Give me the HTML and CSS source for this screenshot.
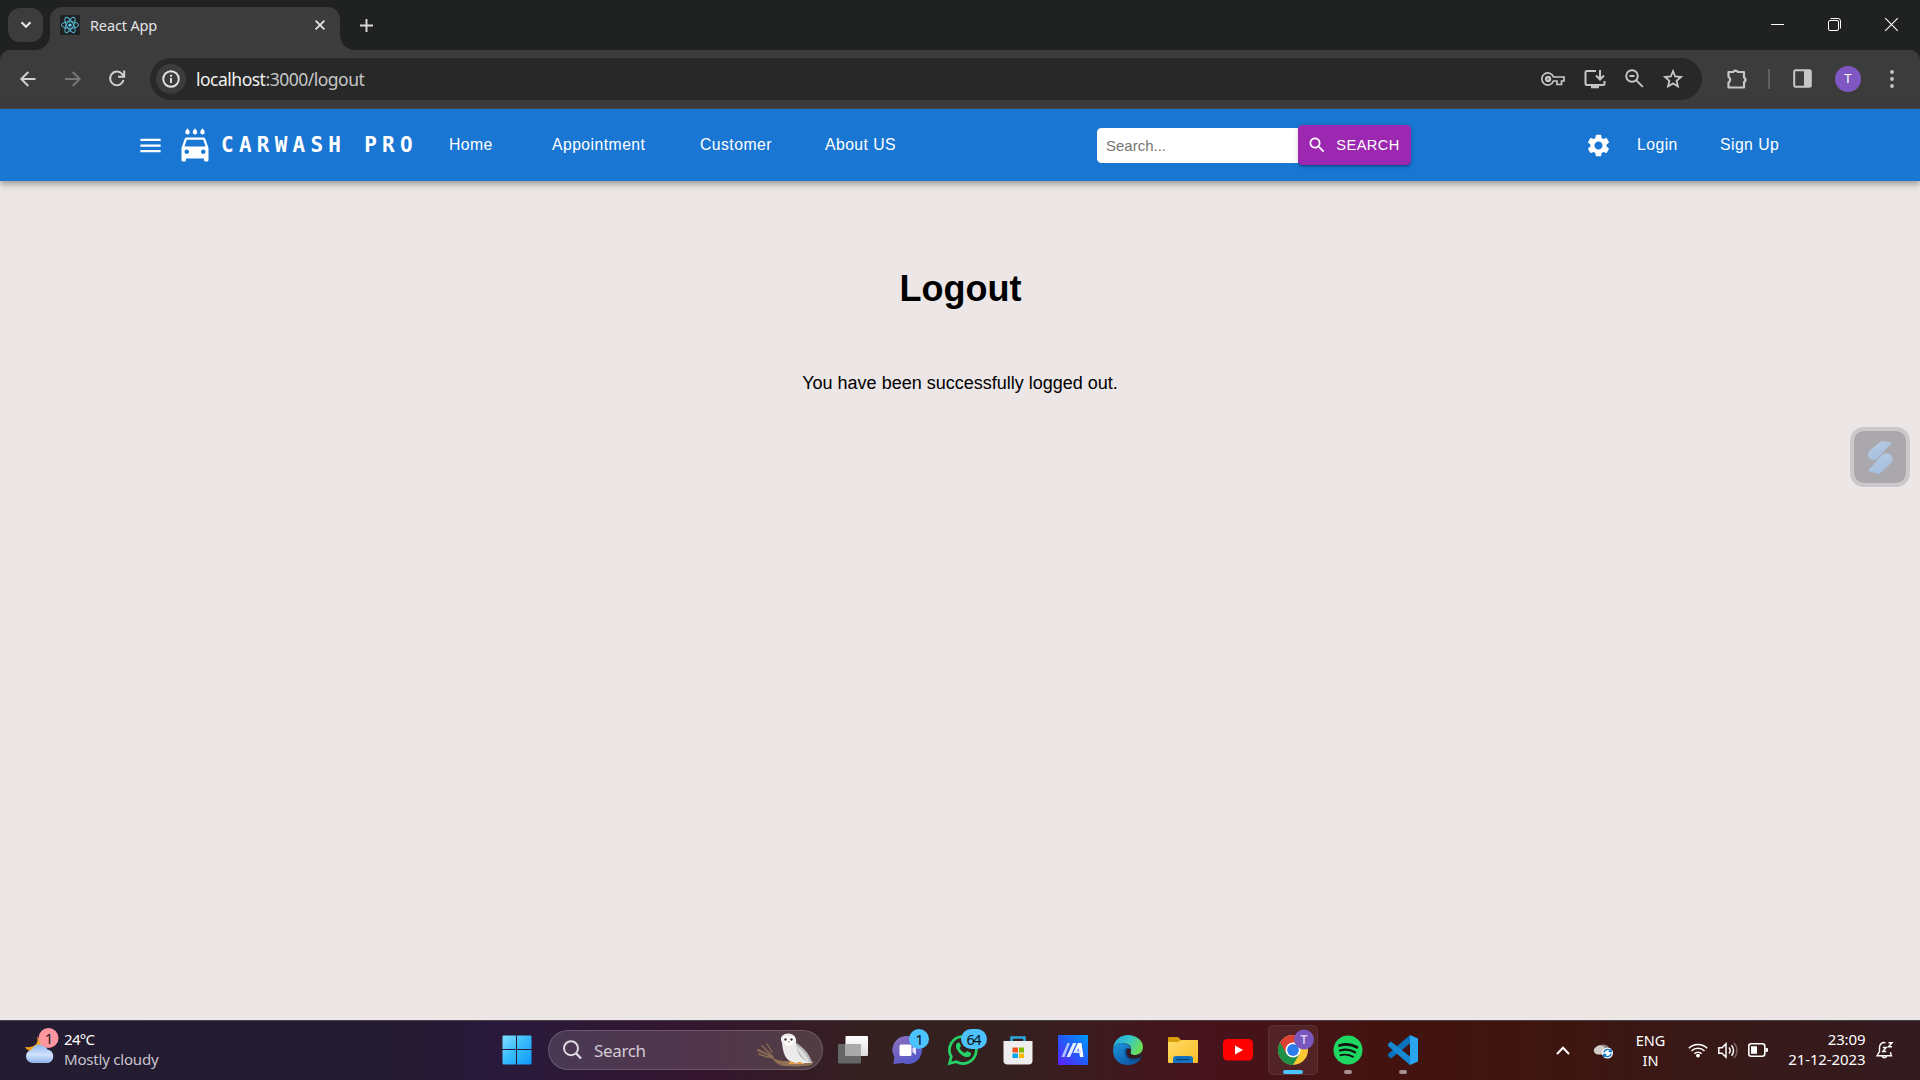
FILE: index.html
```html
<!DOCTYPE html>
<html lang="en">
<head>
<meta charset="utf-8">
<title>React App</title>
<link rel="stylesheet" href="styles.css">
</head>
<body>
<div class="screen">
  <div class="titlebar">
    <div class="tab-search"><svg width="12" height="8" viewBox="0 0 12 8"><path d="M1.5 1.2 6 5.7l4.500-4.500" fill="none" stroke="#e3e3e3" stroke-width="2.200"/></svg></div>
    <div class="tab">
      <svg class="favicon" width="20" height="20" viewBox="0 0 20 20"><rect width="20" height="20" rx="1" fill="#202226"/><g fill="none" stroke="#56b9d2" stroke-width="1"><ellipse cx="10" cy="10" rx="8.600" ry="3.300"/><ellipse cx="10" cy="10" rx="8.600" ry="3.300" transform="rotate(60 10 10)"/><ellipse cx="10" cy="10" rx="8.600" ry="3.300" transform="rotate(120 10 10)"/></g><circle cx="10" cy="10" r="1.600" fill="#61dafb"/></svg>
      <span class="tab-title">React App</span>
      <svg class="tab-close" width="10" height="10" viewBox="0 0 10 10"><path d="M.6.6l8.800 8.800M9.400.6.6 9.400" stroke="#e3e3e3" stroke-width="1.800"/></svg>
    </div>
    <svg class="new-tab" width="13" height="13" viewBox="0 0 13 13"><path d="M6.500 0v13M0 6.500h13" stroke="#dcdcdc" stroke-width="1.900"/></svg>
    <div class="window-buttons">
      <svg width="13" height="13" viewBox="0 0 13 13"><path d="M0 6.500h13" stroke="#fff"/></svg>
      <svg width="13" height="13" viewBox="0 0 13 13" fill="none" stroke="#fff"><rect x=".5" y="2.500" width="10" height="10" rx="1.500"/><path d="M2.500.5H10a2.500 2.500 0 0 1 2.500 2.500v7.500"/></svg>
      <svg width="13" height="13" viewBox="0 0 13 13"><path d="M.2.2l12.600 12.600M12.800.2.2 12.800" stroke="#fff" stroke-width="1.100"/></svg>
    </div>
  </div>

  <div class="toolbar-back">
  <div class="toolbar">
    <div class="nav-buttons">
      <svg width="16" height="16" viewBox="0 0 16 16" fill="none" stroke="#cfcfcf" stroke-width="2"><path d="M15.500 8H2M8.300 1 1.300 8l7 7"/></svg>
      <svg width="16" height="16" viewBox="0 0 16 16" fill="none" stroke="#787878" stroke-width="2"><path d="M0 8h14M7.700 1l7 7-7 7"/></svg>
      <svg width="17" height="17" viewBox="0 0 17 17" fill="none" stroke="#cfcfcf" stroke-width="2"><path d="M14.500 10a6.800 6.800 0 1 1-1.500-6.100L15 6M15.200.5v6.300H9"/></svg>
    </div>
    <div class="omnibox">
      <span class="site-info"><svg width="18" height="18" viewBox="0 0 18 18"><circle cx="9" cy="9" r="7.800" fill="none" stroke="#e3e3e3" stroke-width="1.900"/><path d="M9 8v5M9 4.800v1.900" stroke="#e3e3e3" stroke-width="1.900"/></svg></span>
      <span class="url"><b>localhost</b>:3000/logout</span>
      <div class="omni-icons">
        <svg width="24" height="14" viewBox="0 0 24 14" fill="none" stroke="#c7c7c7" stroke-width="1.700"><path d="M12.500 5a6 6 0 1 0 0 4H16v3.500h4.500V9H23V5z"/><circle cx="7" cy="7" r="2" stroke-width="2.400"/></svg>
        <svg width="22" height="20" viewBox="0 0 22 20" fill="none" stroke="#c7c7c7" stroke-width="2"><path d="M12 2H3a1.500 1.500 0 0 0-1.500 1.500v11A1.500 1.500 0 0 0 3 16h16a1.500 1.500 0 0 0 1.500-1.500V12M16 1v9M12 6.500l4 4 4-4"/><path d="M7 17.800h8" stroke-width="3"/></svg>
        <svg width="19" height="19" viewBox="0 0 19 19" fill="none" stroke="#c7c7c7" stroke-width="1.900"><circle cx="7" cy="7" r="5.800"/><path d="M4.500 7h5M11.300 11.300l6.500 6.500" /></svg>
        <svg width="20" height="20" viewBox="0 0 20 20" fill="none" stroke="#c7c7c7" stroke-width="1.800"><path d="m10 2.200 2.200 5.300 5.800.5-4.400 3.800 1.300 5.600-4.900-3-4.900 3 1.300-5.600L2 8l5.800-.5z"/></svg>
      </div>
    </div>
    <div class="chrome-actions">
      <svg class="puzzle" width="22" height="22" viewBox="0 0 22 22"><path d="M2.500 4h4.700a2.700 2.700 0 0 1 4.600 0H18v5.500a2.400 2.400 0 0 1 0 4.500v5.500H2.500v-5a3 3 0 0 0 0-5.400z" fill="none" stroke="#c7c7c7" stroke-width="2.200" stroke-linejoin="round"/><path d="M7 3.500a2.700 2.700 0 0 1 5 0zM18.500 9a2.700 2.700 0 0 1 0 5z" fill="#c7c7c7"/></svg>
      <i class="divider"></i>
      <svg class="panel" width="19" height="19" viewBox="0 0 19 19"><rect x="1.200" y="1.200" width="16.600" height="16.600" rx="1.500" fill="none" stroke="#c7c7c7" stroke-width="2"/><path d="M11 1h6.500v17H11z" fill="#c7c7c7"/></svg>
      <span class="avatar">T</span>
      <svg class="dots" width="4" height="18" viewBox="0 0 4 18" fill="#c7c7c7"><circle cx="2" cy="2" r="1.900"/><circle cx="2" cy="9" r="1.900"/><circle cx="2" cy="16" r="1.900"/></svg>
    </div>
  </div>
  </div>

  <header class="appbar">
    <svg class="menu" width="27" height="27" viewBox="0 0 24 24" fill="#fff"><path d="M3 18h18v-2H3v2zm0-5h18v-2H3v2zm0-7v2h18V6H3z"/></svg>
    <svg class="carwash" width="36" height="36" viewBox="0 0 24 24" fill="#fff"><path d="M17 5c.83 0 1.500-.67 1.500-1.500 0-1-1.500-2.700-1.500-2.700s-1.500 1.700-1.500 2.700c0 .83.67 1.500 1.500 1.500zm-5 0c.83 0 1.500-.67 1.500-1.500 0-1-1.500-2.700-1.500-2.700s-1.500 1.700-1.500 2.700c0 .83.67 1.500 1.500 1.500zM7 5c.83 0 1.500-.67 1.500-1.500C8.500 2.500 7 .8 7 .8S5.500 2.500 5.500 3.500C5.500 4.330 6.170 5 7 5zm11.920 3.010C18.720 7.420 18.160 7 17.500 7h-11c-.66 0-1.210.42-1.420 1.010L3 14v8c0 .55.45 1 1 1h1c.55 0 1-.45 1-1v-1h12v1c0 .55.45 1 1 1h1c.55 0 1-.45 1-1v-8l-2.080-5.990zM6.500 18c-.83 0-1.500-.67-1.500-1.500S5.670 15 6.500 15s1.500.67 1.500 1.500S7.330 18 6.500 18zm11 0c-.83 0-1.500-.67-1.500-1.500s.67-1.500 1.500-1.500 1.500.67 1.500 1.500-.67 1.500-1.500 1.500zM5 13l1.500-4.500h11L19 13H5z"/></svg>
    <span class="brand">CARWASH PRO</span>
    <nav class="links"><a class="home">Home</a><a class="appointment">Appointment</a><a class="customer">Customer</a><a>About US</a></nav>
    <form class="search">
      <input type="text" placeholder="Search...">
      <button type="button"><svg width="20.250" height="20.250" viewBox="0 0 24 24" fill="#fff"><path d="M15.500 14h-.79l-.28-.27C15.410 12.590 16 11.110 16 9.500 16 5.910 13.090 3 9.500 3S3 5.910 3 9.500 5.910 16 9.500 16c1.610 0 3.090-.59 4.230-1.570l.27.28v.79l5 4.990L20.490 19l-4.990-5zm-6 0C7.010 14 5 11.990 5 9.500S7.010 5 9.500 5 14 7.010 14 9.500 11.990 14 9.500 14z"/></svg><span>SEARCH</span></button>
    </form>
    <svg class="gear" width="27" height="27" viewBox="0 0 24 24" fill="#fff"><path d="M19.140 12.940c.04-.3.06-.61.06-.94 0-.32-.02-.64-.07-.94l2.030-1.580c.18-.14.23-.41.12-.61l-1.920-3.320c-.12-.22-.37-.29-.59-.22l-2.390.96c-.5-.38-1.030-.7-1.620-.94l-.36-2.540c-.04-.24-.24-.41-.48-.41h-3.840c-.24 0-.43.17-.47.41l-.36 2.540c-.59.24-1.130.57-1.620.94l-2.390-.96c-.22-.08-.47 0-.59.22L2.740 8.870c-.12.21-.08.47.12.61l2.030 1.580c-.05.3-.09.63-.09.94s.02.64.07.94l-2.030 1.580c-.18.14-.23.41-.12.61l1.920 3.320c.12.22.37.29.59.22l2.390-.96c.5.38 1.030.7 1.620.94l.36 2.540c.05.24.24.41.48.41h3.840c.24 0 .44-.17.47-.41l.36-2.540c.59-.24 1.130-.56 1.620-.94l2.390.96c.22.08.47 0 .59-.22l1.920-3.320c.12-.22.07-.47-.12-.61l-2.010-1.580zM12 15.600c-1.980 0-3.600-1.620-3.600-3.600s1.620-3.600 3.600-3.600 3.600 1.620 3.600 3.600-1.620 3.600-3.600 3.600z"/></svg>
    <a class="login">Login</a><a class="signup">Sign Up</a>
  </header>

  <main>
    <h1>Logout</h1>
    <p>You have been successfully logged out.</p>
    <div class="widget">
      <svg width="26" height="34" viewBox="0 0 26 34"><defs><linearGradient id="wg" x1="0" y1="0" x2=".6" y2="1"><stop offset="0" stop-color="#bccbde"/><stop offset="1" stop-color="#a3bfe2"/></linearGradient></defs><path d="M14.500.8 25 2.800 9.500 19.500c-3 1-5.500.8-7.500-1.500-2-3-1.200-5 .8-7.500z" fill="url(#wg)"/><path d="M16 14c3.500-1.200 6.500-.8 8.500 1.500 2 3 1.200 5.500-.8 8L12.300 34 .8 31z" fill="url(#wg)"/></svg>
    </div>
  </main>

  <footer class="taskbar">
    <div class="weather">
      <svg width="36" height="38" viewBox="0 0 36 38"><defs><linearGradient id="cl" x1="0" y1="0" x2="0" y2="1"><stop offset="0" stop-color="#8db8f2"/><stop offset=".55" stop-color="#d0e2fb"/><stop offset="1" stop-color="#8fb2ec"/></linearGradient></defs><path d="M12 8c2 7-1.500 12-12 11 4 7 16 5 18-2z" fill="#f5a21c"/><path d="M7 35a6.800 6.800 0 0 1 0-13.500 8.500 8.500 0 0 1 15.500 0A7 7 0 0 1 23.500 35z" fill="url(#cl)"/><circle cx="23.500" cy="10" r="10" fill="#fe96a0"/><text x="24" y="15.500" font-size="15" text-anchor="middle" fill="#222">1</text></svg>
      <div class="weather-text"><span class="temp">24°C</span><span class="sky">Mostly cloudy</span></div>
    </div>
    <svg class="start" width="30" height="30" viewBox="0 0 30 30"><defs><linearGradient id="win" x1="0" y1="0" x2="1" y2="1"><stop offset="0" stop-color="#80e0ff"/><stop offset=".5" stop-color="#35b9fb"/><stop offset="1" stop-color="#0d98f8"/></linearGradient></defs><path d="M1.500.5H14V14H.5V1.500a1 1 0 0 1 1-1zM15 .5h13.500a1 1 0 0 1 1 1V14H15zM.5 15H14v14.500H1.500a1 1 0 0 1-1-1zM15 15h14.500v13.500a1 1 0 0 1-1 1H15z" fill="url(#win)"/></svg>
    <div class="task-search">
      <svg width="19" height="20" viewBox="0 0 19 20" fill="none" stroke="#e0d9e1" stroke-width="2"><circle cx="8" cy="8.200" r="7"/><path d="m13 13.200 5 5.300" stroke-width="2.400"/></svg>
      <span>Search</span>
      <svg class="owl" width="60" height="34" viewBox="0 0 60 34"><g fill="none" stroke="#8d6d53" stroke-linecap="round"><path d="M3 17c8 4 9 3 14 8" stroke-width="2"/><path d="M7 13c5 4 6 6 11 11M4 21l8 3 6 0" stroke-width="1.500"/><path d="M12 11l5 8" stroke-width="1.300"/></g><path d="M15 22c5 6 12 6 19 6h22l3 1-3 3c-12 2-23 1.500-30 .5-5-2-9-7-11-10.500z" fill="#927154"/><path d="M27 10C24 4 28 .5 33 .5c6 0 9 4 8 9.500l7 6c6 5 7 10 9 14h-7c-4 1.500-9 1-13-1-6-2-9-8-10-19z" fill="#ecebea"/><path d="M41 10c7 4 13 10 16 20-8-1-16-8-16-20z" fill="#b7b8bb"/><path d="M40 12c4 8 8 13 12 17l2-1c-3-6-7-12-14-16z" fill="#ddd"/><path d="M28 5c2-3 5-2 5.500 0 2-3 5-2 6 0 0 4-2 7-5 8-4 0-6-4-6.500-8z" fill="#fff"/><circle cx="30.500" cy="6.500" r="1.200" fill="#3b3136"/><circle cx="36.500" cy="6.500" r="1.200" fill="#3b3136"/><path d="m33 8 1 3 .7-3z" fill="#c5966e"/><path d="M34 29h5l2 2h-7zM42 29h4l2 2h-5z" fill="#e59a45"/></svg>
    </div>
    <div class="apps">
      <span><svg viewBox="0 0 30 30"><defs><linearGradient id="tv" x1="0" y1="0" x2="0" y2="1"><stop offset="0" stop-color="#fff"/><stop offset="1" stop-color="#dcdcdc"/></linearGradient></defs><rect y="9" width="23" height="19.500" rx="1" fill="#666"/><rect x="7.500" y="1" width="22.500" height="20" rx="1" fill="url(#tv)"/><path d="M7.500 9H23v12H7.500z" fill="#aaa"/></svg></span>
      <span><svg viewBox="0 0 30 30"><defs><linearGradient id="ch" x1="0" y1="0" x2=".6" y2="1"><stop offset="0" stop-color="#8f70bd"/><stop offset="1" stop-color="#5459cb"/></linearGradient></defs><path d="M15 1a14 14 0 1 1-5 27.100L.4 29l1-7A14 14 0 0 1 15 1z" fill="url(#ch)"/><rect x="6.500" y="9.500" width="12" height="11.500" rx="1.500" fill="#fff"/><path d="m19.500 13 3.500-3v10l-3.500-3z" fill="#e7e5ff"/><circle cx="26" cy="4" r="10" fill="#4cc2ff"/><text x="26.500" y="9.500" font-size="15" text-anchor="middle" fill="#111">1</text></svg></span>
      <span><svg viewBox="0 0 30 30"><path d="M15 1.500A13.500 13.500 0 0 0 3.300 21.800L1.500 28.500l6.800-1.700A13.500 13.500 0 1 0 15 1.500z" fill="none" stroke="#25d366" stroke-width="2.700"/><path d="M10.500 7.500c-3 1-3 4-1.500 7 2.500 4.500 7 8 11 7.500 2.500-.6 3.300-2 3-4l-4-2-2 2c-3-1.200-4.500-3-5.500-5l1.500-2-1.700-3.500z" fill="#25d366"/><rect x="13" y="-6" width="26" height="20" rx="10" fill="#4cc2ff"/><text x="26" y="9.500" font-size="14.500" text-anchor="middle" textLength="15" fill="#111">64</text></svg></span>
      <span><svg viewBox="0 0 30 30"><path d="M8.500 7V2.500h13V7" fill="none" stroke="#2ba9e0" stroke-width="2.500"/><path d="M.5 6h29v19.500a4 4 0 0 1-4 4h-21a4 4 0 0 1-4-4z" fill="#eee"/><path d="M9.500 12.500H15v5H9.500z" fill="#f25022"/><path d="M16 12.500h5v5h-5z" fill="#7fba00"/><path d="M9.500 18.500H15V23H9.500z" fill="#00a4ef"/><path d="M16 18.500h5V23h-5z" fill="#ffb900"/></svg></span>
      <span><svg viewBox="0 0 30 30"><defs><linearGradient id="as" x1="0" y1="1" x2="1" y2="0"><stop offset="0" stop-color="#5d20f5"/><stop offset=".5" stop-color="#235af8"/><stop offset="1" stop-color="#009afe"/></linearGradient></defs><path d="M0 0h30v30H0z" fill="url(#as)"/><path d="M9.500 8H12L6.500 22H3.500z" fill="#acc3ff"/><path d="M15 8h3.500l-6.500 14H8.500z" fill="#e5edff"/><path d="M20 8h3.500l2 14H22l-1.500-9-3 5h-2.300z" fill="#fff"/><path d="M17 15.500h5.500l.5 2.500h-7z" fill="#ccd8ff"/></svg></span>
      <span><svg viewBox="0 0 30 30"><defs><linearGradient id="e1" x1="0" y1="0" x2="1" y2=".4"><stop offset="0" stop-color="#1fa6dc"/><stop offset=".55" stop-color="#38c5c8"/><stop offset="1" stop-color="#69dd58"/></linearGradient><linearGradient id="e2" x1="0" y1="0" x2=".7" y2="1"><stop offset="0" stop-color="#1c96dd"/><stop offset="1" stop-color="#0b56a4"/></linearGradient></defs><path d="M0 14C1 5 7 0 15 0s15 5 15 12c0 6-5 8-9 8-3 0-5-1-4-3 2-1 2-7-4-8.500C7 7 2 9 0 14z" fill="url(#e1)"/><path d="M0 15C1 10 5 8 9 8c6 0 9 4 9 7-3-1-5 2-5 5 1 5 9 7 15 3-3 5-8 7-13 7C6 30 0 24 0 15z" fill="url(#e2)"/><path d="M12.500 13.500c2-1.500 5 0 5 2.500-2 2-2 4 4 4.500 3 0 5-1 7-1.500 1 1 .5 3-.5 4-4 4-10 3.500-13 1-4-3-4-8-2.500-10.500z" fill="#0c4c91"/><path d="M14 14c2-1.500 4.500 0 4 2.500-1 2-.5 3.500 6 4 2-.2 3.500-.8 5-1.200.3 1-.2 2-1 2.700-4 2-9 2-12 .5-2.500-2-3-5.500-2-8.500z" fill="#35181d"/></svg></span>
      <span><svg viewBox="0 0 30 30"><defs><linearGradient id="fo" x1="0" y1="0" x2="1" y2="1"><stop offset="0" stop-color="#ffdb66"/><stop offset="1" stop-color="#fabd26"/></linearGradient></defs><path d="M1 2h9l3 3h16a1 1 0 0 1 1 1v6H0V3a1 1 0 0 1 1-1z" fill="#d99e0b"/><path d="M0 7h10l3-2h16a1 1 0 0 1 1 1v21a1 1 0 0 1-1 1H1a1 1 0 0 1-1-1z" fill="url(#fo)"/><path d="M5 28v-4a3 3 0 0 1 3-3h14a3 3 0 0 1 3 3v4z" fill="#1673be"/><path d="M8.500 24.500h13" stroke="#0b477f" stroke-width="1.500"/></svg></span>
      <span><svg viewBox="0 0 30 30"><rect y="4" width="30" height="21.500" rx="4.500" fill="#f00"/><path d="m12 10.500 8 4.500-8 4.500z" fill="#fff"/></svg></span>
      <span class="active"><svg viewBox="0 0 30 30"><circle cx="15" cy="15" r="15" fill="#fcc934"/><path d="M15 15 2 7.500A15 15 0 0 0 15 30l6.500-11.200z" fill="#1e9148"/><path d="M2 7.500A15 15 0 0 1 28 7.500H15v7.500L8.500 18.700z" fill="#df4035"/><circle cx="15" cy="15" r="7.500" fill="#fff"/><circle cx="15" cy="15" r="5.900" fill="#2e7cec"/><circle cx="26" cy="4.500" r="10" fill="#7957bd"/><text x="26" y="9" font-size="12" font-weight="600" text-anchor="middle" fill="#d9c9ee">T</text></svg></span>
      <span class="running"><svg viewBox="0 0 30 30"><circle cx="15" cy="15" r="14.500" fill="#1ed760"/><g fill="none" stroke="#111" stroke-linecap="round"><path d="M6.500 10.500c6-1.800 12.500-1 17.500 1.800" stroke-width="2.700"/><path d="M7 15.500c5-1.500 10.500-.8 15 1.800" stroke-width="2.300"/><path d="M7.500 20.200c4.500-1.100 8.500-.6 12.500 1.600" stroke-width="1.900"/></g></svg></span>
      <span class="running"><svg viewBox="0 0 30 30"><path d="M22 0v8.500L3 23.500 0 21v-2z" fill="#0873bd"/><path d="M22 30v-8.500L3 6.500 0 9v2z" fill="#1689d2"/><path d="m22 0 8 3.500v23L22 30z" fill="#29a5f2"/></svg></span>
    </div>
    <div class="tray">
      <svg class="chev" width="14" height="9" viewBox="0 0 14 9"><path d="m1 8 6-6.200L13 8" fill="none" stroke="#fff" stroke-width="2"/></svg>
      <svg class="cloud" width="20" height="18" viewBox="0 0 20 18"><path d="M5 7a6 6 0 0 1 11 0v6H5z" fill="#908280"/><path d="M4 13.500A4 4 0 0 1 3 6c3-3 7-2 9 1v6.500z" fill="#d3cccb"/><circle cx="14.500" cy="12" r="5.500" fill="#fff"/><path d="M11 11.500a3.600 3.600 0 0 1 6.700-1.300M18 12.500a3.600 3.600 0 0 1-6.700 1.300M18.200 8v2.500h-2.500M10.800 16v-2.500h2.500" fill="none" stroke="#1677c8" stroke-width="1.400"/></svg>
      <div class="lang"><span>ENG</span><span>IN</span></div>
      <svg class="wifi" width="20" height="16" viewBox="0 0 20 16" fill="none" stroke="#fff" stroke-width="1.500"><path d="M.8 6.200a13 13 0 0 1 18.400 0M3.500 9a9.200 9.200 0 0 1 13 0M6.300 11.800a5.200 5.200 0 0 1 7.400 0"/><circle cx="10" cy="13.600" r="1.200" fill="#fff"/></svg>
      <svg class="volume" width="20" height="17" viewBox="0 0 20 17" fill="none" stroke="#fff" stroke-width="1.500"><path d="M.8 5.800H4l4-4v13.400l-4-4H.8zM11 5.500a4.800 4.800 0 0 1 0 6M13.500 3.200a8 8 0 0 1 0 10.600"/><path d="M16 1a11 11 0 0 1 0 15" stroke="#77615e"/></svg>
      <svg class="battery" width="20" height="14" viewBox="0 0 20 14"><rect x=".8" y=".8" width="16" height="12.400" rx="2.500" fill="none" stroke="#fff" stroke-width="1.600"/><path d="M3 3.200h6v7.600H3zM17.500 5H19a1 1 0 0 1 1 1v2a1 1 0 0 1-1 1h-1.500z" fill="#fff"/></svg>
      <div class="clock"><span class="time">23:09</span><span class="date">21-12-2023</span></div>
      <svg class="bell" width="18" height="19" viewBox="0 0 18 19" fill="none" stroke="#fff" stroke-width="1.400"><path d="M9.500 1.800C6 .8 3.500 3.500 3.500 6.500v4L1 14.700h14.500l-1.200-3.500M5.800 15a2.700 2.700 0 0 0 5 0M6.800 6.500h3.400l-3.400 4h3.400M12.500 1.800H16l-3.500 4H16"/></svg>
    </div>
  </footer>
</div>
</body>
</html>
```
FILE: styles.css
```css
* { box-sizing: border-box; }
body { margin: 0; width: 1920px; height: 1080px; overflow: hidden; font-family: "Noto Sans", sans-serif; }
svg { display: block; flex: none; overflow: visible; }
span, a { white-space: nowrap; }
.screen { display: flex; flex-direction: column; width: 1920px; height: 1080px; background: #ece6e6; }

/* Browser window */
.titlebar { display: flex; height: 50px; flex: none; padding-top: 7px; background: #202221; }
.tab-search { display: flex; align-items: center; justify-content: center; width: 35px; height: 34px; margin: 1px 7px 0 8px; border-radius: 12px; background: #3c3c3c; }
.tab { position: relative; display: flex; align-items: center; width: 290px; height: 43px; padding: 0 15px 7px 10px; border-radius: 12px 12px 0 0; background: #3c3c3c; }
.tab::before, .tab::after { content: ""; position: absolute; bottom: 0; width: 15px; height: 15px; }
.tab::before { right: 100%; background: radial-gradient(circle at 0 0, transparent 14.5px, #3c3c3c 15.5px); }
.tab::after { left: 100%; background: radial-gradient(circle at 100% 0, transparent 14.5px, #3c3c3c 15.5px); }
.tab-title { width: 225px; margin-left: 10px; padding-bottom: 1px; color: #e3e3e3; font-size: 14.5px; letter-spacing: -0.15px; }
.new-tab { margin: 12px 0 0 19.5px; }
.window-buttons { display: flex; gap: 44px; margin: 11px 22px 0 auto; }
.toolbar-back { height: 59px; flex: none; background: #202221; }
.toolbar { display: flex; align-items: center; height: 59px; padding: 0 20px 1px 20px; border-bottom: 1px solid #4a4a4a; border-radius: 10px 10px 0 0; background: #3c3c3c; }
.nav-buttons { display: flex; align-items: center; gap: 28.5px; width: 130px; }
.omnibox { display: flex; align-items: center; width: 1552px; height: 42px; padding: 0 19px 0 6px; border-radius: 21px; background: #282828; }
.site-info { display: flex; align-items: center; justify-content: center; width: 30px; height: 30px; border-radius: 50%; background: #3c3c3c; }
.url { margin-left: 10px; color: #c7c7c7; font-size: 17.5px; letter-spacing: -0.5px; }
.url b { color: #f0f0f0; font-weight: 400; }
.omni-icons { display: flex; align-items: center; gap: 19px; margin-left: auto; }
.chrome-actions { display: flex; align-items: center; margin-left: 24px; }
.divider { width: 2px; height: 20px; margin-left: 20px; background: #606060; }
.panel { margin-left: 23px; }
.avatar { width: 26px; height: 26px; margin-left: 23px; border-radius: 50%; background: #7e57c2; color: #fff; font: 13px/26px Roboto, sans-serif; text-align: center; }
.dots { margin-left: 29px; }

/* Application bar */
.appbar { position: relative; display: flex; align-items: center; flex: none; height: 72px; padding-left: 137px; background: #1976d2; color: #fff; box-shadow: 0 2px 4.500px -1px rgba(0,0,0,.2), 0 4.500px 5.600px rgba(0,0,0,.14), 0 1px 11px rgba(0,0,0,.12); font-family: "Liberation Sans", Arial, sans-serif; font-size: 15.75px; letter-spacing: .45px; }
.carwash { margin-left: 13px; }
.brand { width: 228px; margin-left: 8px; font: 700 21px "DejaVu Sans Mono", monospace; letter-spacing: 5.25px; }
.links { display: flex; width: 648px; }
.home { width: 103px; }
.appointment { width: 148px; }
.customer { width: 125px; }
.search { display: flex; align-items: center; width: 314px; }
.search input { width: 201px; height: 35px; padding: 1px 9px; border: 0; border-radius: 4.500px 0 0 4.500px; outline: 0; font: 15px "Liberation Sans", Arial, sans-serif; }
.search input::placeholder { color: #757575; }
.search button { display: flex; align-items: center; gap: 9.5px; width: 113px; height: 40px; padding: 0 0 0 8.500px; border: 0; border-radius: 4.500px; background: #9c27b0; color: #fff; box-shadow: 0 3px 1px -2px rgba(0,0,0,.2), 0 2px 2px rgba(0,0,0,.14), 0 1px 6px rgba(0,0,0,.12); font: 14.600px "Liberation Sans", Arial, sans-serif; letter-spacing: .46px; }
.search button span { padding-bottom: 1px; }
.gear { margin-left: 174px; }
.login { width: 83px; margin-left: 25px; }

/* Page */
main { position: relative; flex: 1; color: #000; font-family: "Liberation Sans", Arial, sans-serif; text-align: center; }
h1 { margin: 87px 0 0; padding-left: 1px; font-size: 36px; line-height: 42px; }
p { margin: 62px 0 0; font-size: 18px; line-height: 22px; }
.widget { position: absolute; top: 246px; right: 10px; display: flex; align-items: center; justify-content: center; width: 60px; height: 60px; border: 4px solid #ccc7ca; border-radius: 14px; background: #aaa8ac; }

/* Taskbar */
.taskbar { display: flex; align-items: center; flex: none; height: 60px; padding-bottom: 1px; border-top: 1px solid #49424c; color: #fff; background: linear-gradient(90deg, #241c31 0, #241b32 400px, #29193b 500px, #35162f 700px, #351c26 800px, #34211f 880px, #34211f 1000px, #47131c 1200px, #43130f 1400px, #3e1610 1560px, #371918 1720px, #341b20 1920px); }
.weather { display: flex; align-items: center; width: 477px; padding-left: 25px; }
.weather svg { margin-bottom: 7px; }
.weather-text { display: flex; flex-direction: column; margin: 0 0 2px 3px; font-size: 15px; line-height: 20px; letter-spacing: -0.2px; }
.temp { letter-spacing: -0.7px; }
.sky { color: #c8c4cc; }
.start { margin-left: 24.500px; }
.task-search { display: flex; align-items: center; width: 275px; height: 40px; margin-left: 16.500px; padding: 0 7px 0 14px; border: 1px solid rgba(255,255,255,.16); border-radius: 20px; background: rgba(255,255,255,.14); }
.task-search span { margin-left: 12px; color: #d3cbd4; font-size: 17px; letter-spacing: -0.35px; }
.owl { margin-left: auto; }
.apps { display: grid; grid-template-columns: repeat(11, 55px); margin-left: 2.500px; }
.apps > span { position: relative; display: flex; align-items: center; justify-content: center; width: 50px; height: 50px; margin: 0 auto; border-radius: 5px; }
.apps svg { width: 30px; height: 30px; }
.apps .active { background: rgba(255,255,255,.07); box-shadow: inset 0 0 0 1px rgba(255,255,255,.06); }
.active::after, .running::after { content: ""; position: absolute; bottom: 1px; left: 15px; width: 20px; height: 4px; border-radius: 2px; background: #4cc2ff; }
.running::after { left: 21px; width: 8px; background: #a49292; }
.tray { display: flex; align-items: center; margin-left: 125px; font-size: 15px; line-height: 20px; }
.cloud { margin-left: 23px; }
.lang { display: flex; flex-direction: column; align-items: center; width: 40px; margin: 0 0 1px 18px; font-size: 14.500px; }
.wifi { margin-left: 17px; }
.volume { margin-left: 10px; }
.battery { margin-left: 10px; }
.clock { display: flex; flex-direction: column; align-items: flex-end; width: 88px; margin: 0 0 2px 10px; letter-spacing: -0.1px; }
.bell { margin-left: 10.500px; }
```
